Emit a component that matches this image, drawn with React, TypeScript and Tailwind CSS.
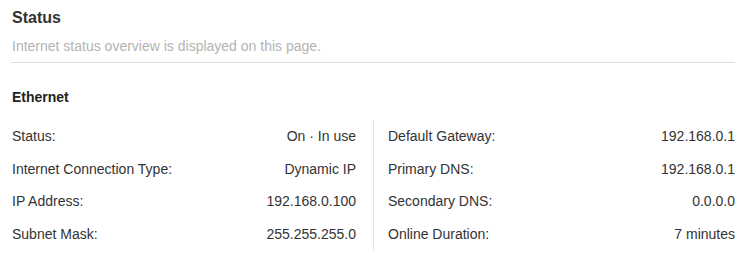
const left = [
  { label: "Status:", value: "On · In use" },
  { label: "Internet Connection Type:", value: "Dynamic IP" },
  { label: "IP Address:", value: "192.168.0.100" },
  { label: "Subnet Mask:", value: "255.255.255.0" },
];

const right = [
  { label: "Default Gateway:", value: "192.168.0.1" },
  { label: "Primary DNS:", value: "192.168.0.1" },
  { label: "Secondary DNS:", value: "0.0.0.0" },
  { label: "Online Duration:", value: "7 minutes" },
];

function InfoRow({ label, value }: { label: string; value: string }) {
  return (
    <div className="flex h-[32.67px] items-center justify-between text-sm text-[#333]">
      <span>{label}</span>
      <span>{value}</span>
    </div>
  );
}

export default function App() {
  return (
    <div className="h-[261px] w-[752px] bg-white pl-[11px] pr-[17px] pt-[8px] font-['Liberation_Sans',Arial,sans-serif]">
      <div className="border-b border-[#dddddd] pb-[6px]">
        <h1 className="pl-px text-base leading-5 font-bold text-[#333]">Status</h1>
        <p className="mt-2 pl-px text-sm leading-5 text-[#b3b3b3]">
          Internet status overview is displayed on this page.
        </p>
      </div>
      <h2 className="mt-6 pl-px text-sm leading-5 font-bold text-[#222]">Ethernet</h2>
      <div className="mt-[12.7px] flex">
        <div className="w-[363px] border-r border-[#e3e3e3] pl-px pr-[17px]">
          {left.map((r) => (
            <InfoRow key={r.label} {...r} />
          ))}
        </div>
        <div className="flex-1 pl-[14px]">
          {right.map((r) => (
            <InfoRow key={r.label} {...r} />
          ))}
        </div>
      </div>
    </div>
  );
}
